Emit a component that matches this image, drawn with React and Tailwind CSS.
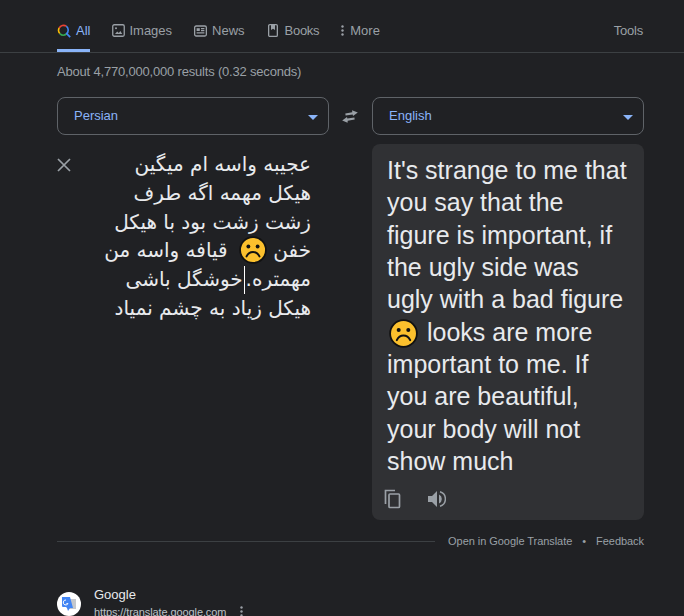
import React from 'react';

function SadFace({ size = 29, className = '' }) {
  return (
    <svg width={size} height={size} viewBox="0 0 26 26" className={`inline-block align-[-7px] ${className}`}>
      <circle cx="13" cy="13" r="12" fill="#fbc02d" stroke="#111" strokeWidth="1.6" />
      <circle cx="8.7" cy="9.8" r="1.8" fill="#111" />
      <circle cx="17.3" cy="9.8" r="1.8" fill="#111" />
      <path d="M7 19c1.4-3 3.6-4.2 6-4.2s4.6 1.2 6 4.2" fill="none" stroke="#111" strokeWidth="1.8" strokeLinecap="round" />
    </svg>
  );
}

function GoogleLens() {
  return (
    <svg width="14" height="14" viewBox="0 0 14 14" fill="none" strokeWidth="1.6">
      <path d="M9.3 2.2A5 5 0 0 0 2.2 4" stroke="#ea4335" />
      <path d="M2.2 4a5 5 0 0 0 .6 5.6" stroke="#fbbc05" />
      <path d="M2.8 9.6a5 5 0 0 0 6.6.4" stroke="#34a853" />
      <path d="M9.4 10a5 5 0 0 0-.1-7.8" stroke="#4285f4" />
      <path d="M9.2 9.2l4 4" stroke="#4285f4" strokeWidth="1.8" />
    </svg>
  );
}

function ImagesIcon() {
  return (
    <svg width="13" height="13" viewBox="0 0 13 13" fill="none">
      <rect x="0.75" y="0.75" width="11.5" height="11.5" rx="1.5" stroke="#9aa0a6" strokeWidth="1.3" />
      <circle cx="4" cy="4.2" r="1" fill="#9aa0a6" />
      <path d="M3 10l2.2-2.6 1.6 1.6L8.4 7 10.2 10z" fill="#9aa0a6" />
    </svg>
  );
}

function NewsIcon() {
  return (
    <svg width="13" height="12" viewBox="0 0 13 12" fill="none">
      <rect x="0.65" y="1" width="11.7" height="10" rx="1.5" stroke="#9aa0a6" strokeWidth="1.3" />
      <rect x="2.6" y="3.2" width="3.2" height="2.8" fill="#9aa0a6" />
      <path d="M7 3.6h3.4M7 5.6h3.4M2.6 7.9h7.8" stroke="#9aa0a6" strokeWidth="1.1" />
    </svg>
  );
}

function BooksIcon() {
  return (
    <svg width="10" height="13" viewBox="0 0 10 13" fill="none">
      <rect x="0.65" y="0.65" width="8.7" height="11.7" rx="1.2" stroke="#9aa0a6" strokeWidth="1.3" />
      <path d="M3 1h4v5L5 4.8 3 6z" fill="#9aa0a6" />
    </svg>
  );
}

function DotsIcon({ color = '#9aa0a6' }) {
  return (
    <svg width="3" height="11" viewBox="0 0 3 11" fill={color}>
      <circle cx="1.5" cy="1.5" r="1.2" />
      <circle cx="1.5" cy="5.5" r="1.2" />
      <circle cx="1.5" cy="9.5" r="1.2" />
    </svg>
  );
}

function LangSelect({ label }) {
  return (
    <div className="flex h-[38px] w-[272px] items-center justify-between rounded-lg border border-[#5f6368] pl-4 pr-[10px]">
      <span className="pb-[1px] text-[13px] text-[#8ab4f8]">{label}</span>
      <span className="mt-[2px] h-0 w-0 border-x-[5px] border-t-[5px] border-x-transparent border-t-[#8ab4f8]" />
    </div>
  );
}

export default function App() {
  const tabs = [
    { label: 'Images', icon: <ImagesIcon />, cls: 'gap-[4px]' },
    { label: 'News', icon: <NewsIcon />, cls: 'gap-[5px]' },
    { label: 'Books', icon: <BooksIcon />, cls: 'ml-[1px] gap-[7px] tracking-[-0.3px]' },
    { label: 'More', icon: <DotsIcon />, cls: 'gap-[6px]' },
  ];

  return (
    <div className="h-[616px] w-[684px] overflow-hidden bg-[#202124] font-['Liberation_Sans',Arial,sans-serif]">
      {/* Tabs */}
      <div className="flex h-[53px] items-stretch justify-between border-b border-[#3c4043] pl-[57px] pr-[41px] pt-[12px] text-[13px] text-[#9aa0a6]">
        <div className="flex gap-[22px]">
          <div className="flex h-[40px] items-center gap-[5px] border-b-[3px] border-[#8ab4f8] text-[#8ab4f8]">
            <GoogleLens />
            All
          </div>
          {tabs.map((tab) => (
            <div key={tab.label} className={`flex h-[40px] items-center pb-[3px] ${tab.cls}`}>
              {tab.icon}
              {tab.label}
            </div>
          ))}
        </div>
        <div className="flex h-[40px] items-center pb-[3px] tracking-[-0.2px]">Tools</div>
      </div>

      <div className="pl-[57px] pr-[40px]">
        <div className="mt-[10px] text-[13px] leading-[17px] tracking-[-0.19px] text-[#9aa0a6]">About 4,770,000,000 results (0.32 seconds)</div>

        {/* Language pickers */}
        <div className="mt-[17px] flex items-center justify-between">
          <LangSelect label="Persian" />
          <svg width="16" height="13" viewBox="0 0 16 13" fill="#9aa0a6" className="mr-[2px]">
            <path d="M10 0.3L15.8 2.4 11 6 10.7 4.4 3.6 5.6 3.3 3.6 10.3 2.2z" />
            <path d="M5.6 12.7L0.2 10.6 5 7 5.3 8.6 12.4 7.4 12.7 9.4 5.7 10.8z" />
          </svg>
          <LangSelect label="English" />
        </div>

        {/* Translation panels */}
        <div className="mt-[9px] flex justify-between">
          <div className="flex w-[272px] items-start">
            <svg width="14" height="14" viewBox="0 0 14 14" className="mt-[14px]" stroke="#9aa0a6" strokeWidth="1.7">
              <path d="M1 1l12 12M13 1L1 13" />
            </svg>
            <div dir="rtl" className="ml-[20px] w-[220px] whitespace-nowrap pt-[6px] text-right font-['DejaVu_Sans',sans-serif] text-[20px] leading-[28.8px] text-[#e8eaed]">
              عجیبه واسه ام میگین
              <br />
              هیکل مهمه اگه طرف
              <br />
              زشت زشت بود با هیکل
              <br />
              خفن <SadFace size={28} className="ml-[5px]" /> قیافه واسه من
              <br />
              مهمتره.<span className="mx-[1px] inline-block h-[28px] w-px bg-white align-[-8px]" />خوشگل باشی
              <br />
              هیکل زیاد به چشم نمیاد
            </div>
          </div>

          <div className="flex h-[376px] w-[272px] flex-col rounded-lg bg-[#303134] px-[15px] pt-[10px]">
            <div className="text-[25px] leading-[32.33px] text-[#e8eaed]">
              It's strange to me that you say that the figure is important, if the ugly side was ugly with a bad figure <SadFace className="ml-[2px] mr-[2px]" /> looks are more important to me. If you are beautiful, your body will not show much
            </div>
            <div className="ml-[-3px] mt-[12px] flex items-center gap-[26px] text-[#9aa0a6]">
              <svg width="18" height="20" viewBox="0 0 18 20" fill="none" stroke="#9aa0a6" strokeWidth="1.7">
                <path d="M1.5 15V1.5H11" />
                <rect x="5" y="5" width="10.5" height="13.5" rx="1" />
              </svg>
              <svg width="18" height="16" viewBox="0 0 18 16" fill="#9aa0a6">
                <path d="M0 5h4l5-5v16l-5-5H0z" />
                <path d="M11 3.5a5 5 0 0 1 0 9z" />
                <path d="M12 0.8a7.5 7.5 0 0 1 0 14.4" fill="none" stroke="#9aa0a6" strokeWidth="1.5" />
              </svg>
            </div>
          </div>
        </div>

        {/* Footer links */}
        <div className="mt-[13px] flex items-center text-[11px] tracking-[-0.05px] text-[#9aa0a6]">
          <div className="h-px flex-1 bg-[#3c4043]" />
          <span className="ml-[13px]">Open in Google Translate</span>
          <span className="mx-[10px]">•</span>
          <span>Feedback</span>
        </div>

        {/* Result source */}
        <div className="mt-[36px] flex items-start">
          <div className="mt-[6px] flex h-[24px] w-[24px] items-center justify-center rounded-full bg-white">
            <svg width="18" height="18" viewBox="0 0 18 18">
              <path d="M9 4h7v10H9z" fill="#c4c7cc" />
              <path d="M2 2h8l3 11H7l-1-1H3a1 1 0 0 1-1-1z" fill="#4285f4" />
              <path d="M8 16l2-3H7z" fill="#4285f4" />
              <path d="M6 5a2.5 2.5 0 1 0 2 3.6H6.4" fill="none" stroke="#fff" strokeWidth="1" />
            </svg>
          </div>
          <div className="ml-[13px]">
            <div className="text-[13px] leading-[17px] text-[#e8eaed]">Google</div>
            <div className="mt-[1px] flex items-center gap-[14px] text-[11px] leading-[16px] tracking-[-0.1px] text-[#bdc1c6]">
              https://translate.google.com
              <DotsIcon />
            </div>
          </div>
        </div>
      </div>
    </div>
  );
}
